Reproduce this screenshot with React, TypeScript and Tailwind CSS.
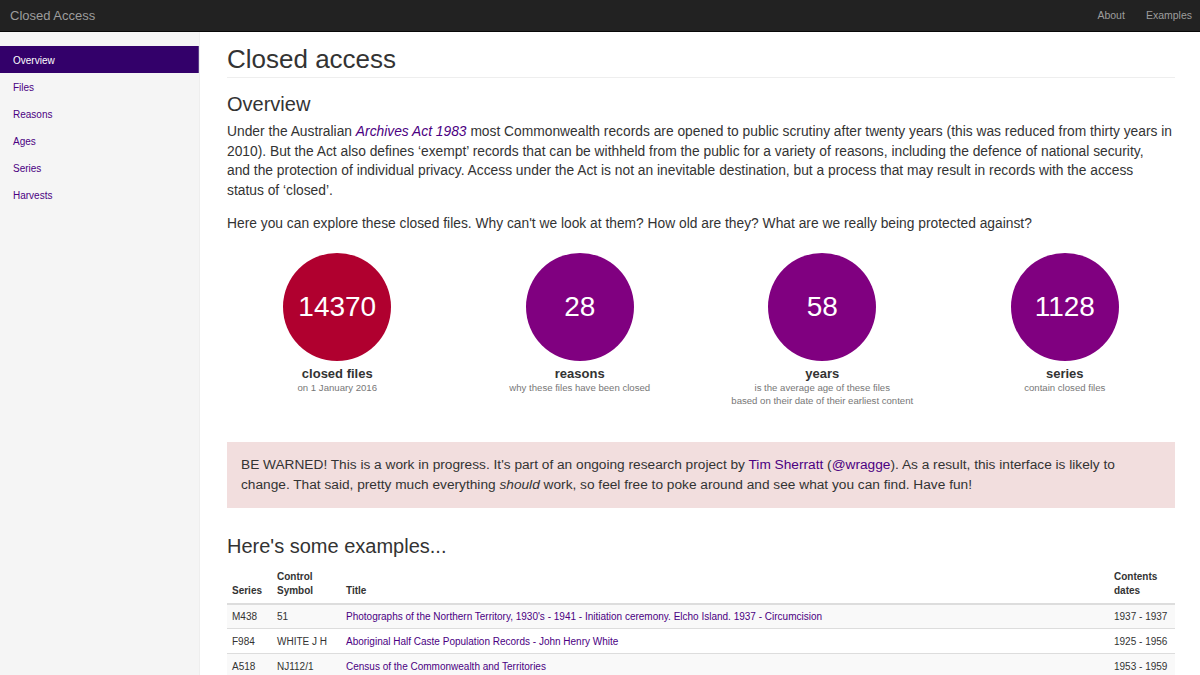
import React from 'react'

const navItems = ['Overview', 'Files', 'Reasons', 'Ages', 'Series', 'Harvests']

const stats = [
  { value: '14370', label: 'closed files', sub: ['on 1 January 2016'], color: 'bg-[#b0002f]' },
  { value: '28', label: 'reasons', sub: ['why these files have been closed'], color: 'bg-[#800080]' },
  {
    value: '58',
    label: 'years',
    sub: ['is the average age of these files', 'based on their date of their earliest content'],
    color: 'bg-[#800080]',
  },
  { value: '1128', label: 'series', sub: ['contain closed files'], color: 'bg-[#800080]' },
]

const rows = [
  {
    series: 'M438',
    control: '51',
    title: "Photographs of the Northern Territory, 1930's - 1941 - Initiation ceremony. Elcho Island. 1937 - Circumcision",
    dates: '1937 - 1937',
  },
  { series: 'F984', control: 'WHITE J H', title: 'Aboriginal Half Caste Population Records - John Henry White', dates: '1925 - 1956' },
  { series: 'A518', control: 'NJ112/1', title: 'Census of the Commonwealth and Territories', dates: '1953 - 1959' },
]

export default function App() {
  return (
    <div className="h-[675px] overflow-hidden bg-white text-[#333] font-['Liberation_Sans',Arial,sans-serif]">
      <header className="h-8 bg-[#222] border-b border-[#080808] flex items-center justify-between pl-[10px] pr-[8px]">
        <span className="text-[13px] text-[#9d9d9d]">Closed Access</span>
        <nav className="flex gap-[21px] text-[10.5px] text-[#9d9d9d]">
          <span>About</span>
          <span>Examples</span>
        </nav>
      </header>

      <div className="flex">
        <aside className="w-[200px] h-[643px] shrink-0 bg-[#f5f5f5] border-r border-[#eee] pt-[14px]">
          <ul className="text-[10px]">
            {navItems.map((item, i) => (
              <li
                key={item}
                className={
                  i === 0
                    ? 'h-[27px] flex items-center px-[13px] pt-[1px] bg-[#33006a] text-white border-r border-[#5a3d8a]'
                    : 'h-[27px] flex items-center px-[13px] pt-[1px] text-[#4b0082]'
                }
              >
                {item}
              </li>
            ))}
          </ul>
        </aside>

        <main className="flex-1 pl-[27px] pr-[25px]">
          <h1 className="text-[26px] leading-[30px] pt-[12px] pb-[3px] border-b border-[#eee]">Closed access</h1>
          <h2 className="text-[20px] leading-[24px] mt-[14px]">Overview</h2>
          {/* line breaks follow the reference's wrapping */}
          <p className="text-[13.8px] leading-[19.6px] mt-[6px]">
            Under the Australian <em className="text-[#4b0082]">Archives Act 1983</em> most Commonwealth records are opened
            to public scrutiny after twenty years (this was reduced from thirty years in
            <br />
            2010). But the Act also defines ‘exempt’ records that can be withheld from the public for a variety of reasons,
            including the defence of national security,
            <br />
            and the protection of individual privacy. Access under the Act is not an inevitable destination, but a process
            that may result in records with the access
            <br />
            status of ‘closed’.
          </p>
          <p className="text-[13.8px] leading-[19.6px] mt-[14px]">
            Here you can explore these closed files. Why can't we look at them? How old are they? What are we really being
            protected against?
          </p>

          <div className="grid grid-cols-4 -mx-[11px] mt-[19px]">
            {stats.map((s) => (
              <div key={s.label} className="flex flex-col items-center text-center">
                <div
                  className={`w-[108px] h-[108px] rounded-full ${s.color} flex items-center justify-center text-white text-[28px]`}
                >
                  {s.value}
                </div>
                <div className="text-[13px] font-bold mt-[6px] leading-[14px]">{s.label}</div>
                {s.sub.map((t) => (
                  <div key={t} className="text-[9.6px] leading-[13px] text-[#777]">
                    {t}
                  </div>
                ))}
              </div>
            ))}
          </div>

          <div className="mt-[35px] bg-[#f2dede] px-[14px] py-[13px] text-[13.7px] leading-[20px] text-[#333]">
            BE WARNED! This is a work in progress. It's part of an ongoing research project by{' '}
            <span className="text-[#4b0082]">Tim Sherratt</span> (<span className="text-[#4b0082]">@wragge</span>). As a
            result, this interface is likely to change. That said, pretty much everything <em>should</em> work, so feel free
            to poke around and see what you can find. Have fun!
          </div>

          <h2 className="text-[20px] leading-[24px] mt-[26px]">Here's some examples...</h2>

          <table className="w-full mt-[7px] text-[10px] border-collapse">
            <thead>
              <tr className="border-b-2 border-[#ddd] text-left align-bottom">
                <th className="font-bold px-[5px] py-[5px] w-[45px] leading-[14px]">Series</th>
                <th className="font-bold px-[5px] py-[5px] w-[69px] leading-[14px]">
                  Control
                  <br />
                  Symbol
                </th>
                <th className="font-bold px-[5px] py-[5px] leading-[14px]">Title</th>
                <th className="font-bold px-[5px] py-[5px] w-[66px] leading-[14px]">
                  Contents
                  <br />
                  dates
                </th>
              </tr>
            </thead>
            <tbody>
              {rows.map((r, i) => (
                <tr key={r.series} className={i % 2 === 0 ? 'bg-[#f9f9f9] border-b border-[#ddd]' : 'border-b border-[#ddd]'}>
                  <td className="px-[5px] h-[25px] whitespace-nowrap">{r.series}</td>
                  <td className="px-[5px] whitespace-nowrap">{r.control}</td>
                  <td className="px-[5px] text-[#4b0082]">{r.title}</td>
                  <td className="px-[5px] whitespace-nowrap">{r.dates}</td>
                </tr>
              ))}
            </tbody>
          </table>
        </main>
      </div>
    </div>
  )
}
